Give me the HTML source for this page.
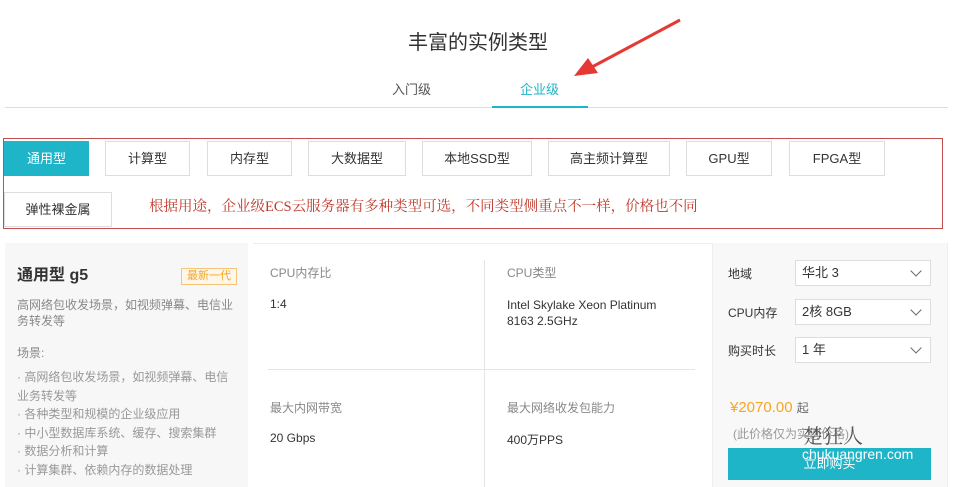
<!DOCTYPE html>
<html><head><meta charset="utf-8"><style>
*{margin:0;padding:0;box-sizing:border-box}
body{width:956px;height:487px;overflow:hidden;background:#fff;font-family:"Liberation Sans","Noto Sans CJK SC",sans-serif;position:relative;color:#333}
.a{position:absolute;white-space:nowrap}
.btn{position:absolute;border:1px solid #ddd;background:#fff;font-size:13px;color:#333;text-align:center;line-height:33px;height:35px}
.sel{position:absolute;left:795px;width:136px;height:26px;border:1px solid #ddd;background:#fff;font-size:13px;line-height:24px;padding-left:6px;color:#333}
.sel:after{content:"";position:absolute;right:10px;top:6px;width:7px;height:7px;border-right:1px solid #666;border-bottom:1px solid #666;transform:rotate(45deg)}
.g{color:#888;font-size:12px}
.li{font-size:12px;color:#999}
</style></head><body>
<div class="a" style="left:0;width:956px;text-align:center;top:26px;font-size:20px;color:#333">丰富的实例类型</div>
<div class="a" style="left:392px;top:79px;font-size:13px;color:#555">入门级</div>
<div class="a" style="left:520px;top:79px;font-size:13px;color:#1fb5c9">企业级</div>
<div class="a" style="left:5px;top:107px;width:943px;height:1px;background:#ddd"></div>
<div class="a" style="left:492px;top:106px;width:96px;height:2px;background:#1fb5c9"></div>
<svg class="a" style="left:0;top:0" width="956" height="120"><line x1="680" y1="20" x2="592" y2="67" stroke="#e53935" stroke-width="3"/><polygon points="574,76 588,58 598,73" fill="#e53935"/></svg>
<div class="a" style="left:3px;top:138px;width:940px;height:91px;border:1px solid #c0504d"></div>
<div class="btn" style="left:4px;top:141px;width:85px;background:#1fb5c9;border-color:#1fb5c9;color:#fff">通用型</div>
<div class="btn" style="left:105px;top:141px;width:85px">计算型</div>
<div class="btn" style="left:207px;top:141px;width:85px">内存型</div>
<div class="btn" style="left:308px;top:141px;width:98px">大数据型</div>
<div class="btn" style="left:422px;top:141px;width:110px">本地SSD型</div>
<div class="btn" style="left:548px;top:141px;width:122px">高主频计算型</div>
<div class="btn" style="left:686px;top:141px;width:86px">GPU型</div>
<div class="btn" style="left:789px;top:141px;width:96px">FPGA型</div>
<div class="btn" style="left:4px;top:192px;width:108px">弹性裸金属</div>
<div class="a" style="left:149px;top:195px;font-size:14.5px;color:#c0392b;font-family:'Liberation Serif','Noto Serif CJK SC',serif">根据用途，企业级ECS云服务器有多种类型可选，不同类型侧重点不一样，价格也不同</div>
<div class="a" style="left:5px;top:243px;width:243px;height:244px;background:#f7f7f7"></div>
<div class="a" style="left:712px;top:243px;width:236px;height:244px;background:#f8f8f8;border-left:1px solid #eee;border-right:1px solid #eee"></div>
<div class="a" style="left:253px;top:243px;width:459px;height:1px;background:#eee"></div>
<div class="a" style="left:17px;top:261px;font-size:16px;font-weight:bold;color:#333">通用型 g5</div>
<div class="a" style="left:181px;top:268px;width:56px;height:17px;border:1px solid #f5c37a;background:#fdf6ea;color:#f5a623;font-size:11px;line-height:15px;text-align:center">最新一代</div>
<div class="a g" style="left:17px;top:297px;line-height:16px">高网络包收发场景，如视频弹幕、电信业<br>务转发等</div>
<div class="a g" style="left:17px;top:344px">场景:</div>
<div class="a li" style="left:17px;top:368px;line-height:18.5px">· 高网络包收发场景，如视频弹幕、电信<br>业务转发等<br>· 各种类型和规模的企业级应用<br>· 中小型数据库系统、缓存、搜索集群<br>· 数据分析和计算<br>· 计算集群、依赖内存的数据处理</div>
<div class="a" style="left:484px;top:260px;width:1px;height:227px;background:#e5e5e5"></div>
<div class="a" style="left:268px;top:369px;width:427px;height:1px;background:#e5e5e5"></div>
<div class="a g" style="left:270px;top:264px">CPU内存比</div>
<div class="a" style="left:270px;top:297px;font-size:12px">1:4</div>
<div class="a g" style="left:507px;top:264px">CPU类型</div>
<div class="a" style="left:507px;top:297px;font-size:12px;line-height:16px">Intel Skylake Xeon Platinum<br>8163 2.5GHz</div>
<div class="a g" style="left:270px;top:399px">最大内网带宽</div>
<div class="a" style="left:270px;top:431px;font-size:12px">20 Gbps</div>
<div class="a g" style="left:507px;top:399px">最大网络收发包能力</div>
<div class="a" style="left:507px;top:431px;font-size:12px">400万PPS</div>
<div class="a" style="left:728px;top:265px;font-size:12px">地域</div>
<div class="sel" style="top:260px">华北 3</div>
<div class="a" style="left:728px;top:304px;font-size:12px">CPU内存</div>
<div class="sel" style="top:299px">2核 8GB</div>
<div class="a" style="left:728px;top:342px;font-size:12px">购买时长</div>
<div class="sel" style="top:337px">1 年</div>
<div class="a" style="left:730px;top:399px;font-size:15px;color:#f5a623">¥2070.00 <span style="font-size:12px;color:#666">起</span></div>
<div class="a" style="left:733px;top:425px;font-size:12px;color:#999">(此价格仅为实例价格)</div>
<div class="a" style="left:728px;top:448px;width:203px;height:32px;background:#1fb5c9;color:#fff;font-size:13px;text-align:center;line-height:32px">立即购买</div>
<div class="a" style="left:803px;top:420px;font-size:20px;color:#555;font-family:'Noto Serif CJK SC',serif">楚狂人</div>
<div class="a" style="left:802px;top:446px;font-size:14px;color:#fff">chukuangren.com</div>
</body></html>
